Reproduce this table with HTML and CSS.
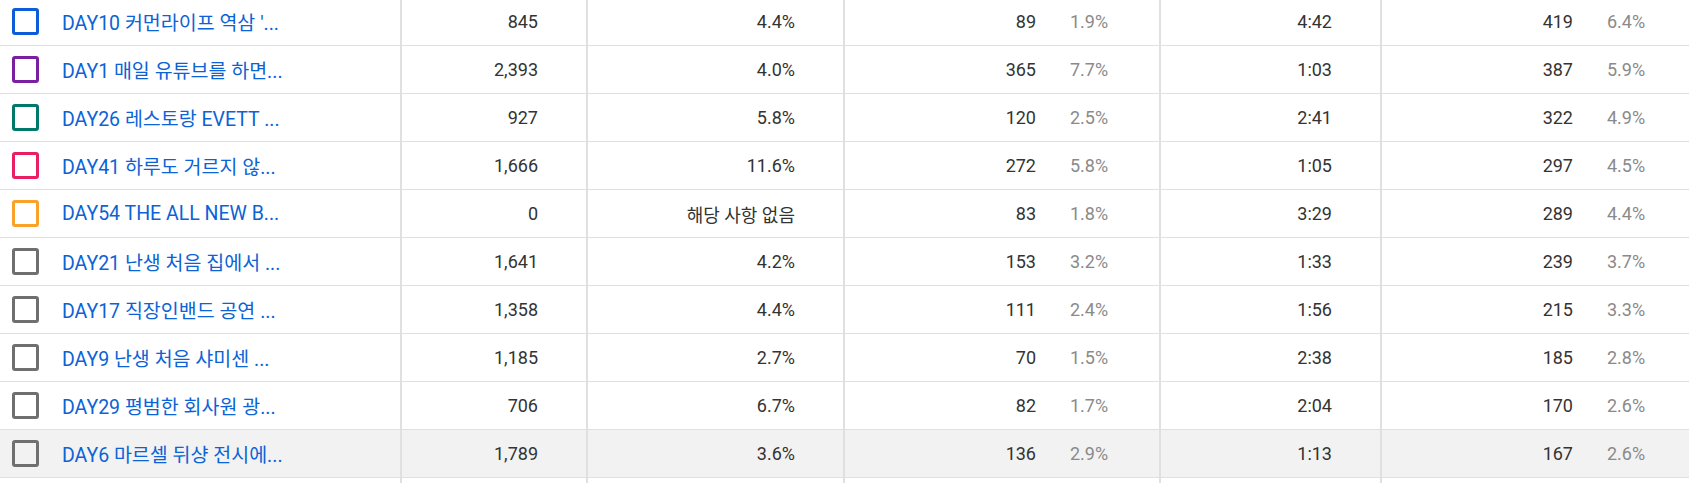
FILE: index.html
```html
<!DOCTYPE html>
<html lang="ko">
<head>
<meta charset="utf-8">
<link rel="stylesheet" href="styles.css">
</head>
<body>
<div class="table">
  <div class="row">
    <div class="cell c-title"><span class="cb cb-blue"></span><a class="title">DAY10 커먼라이프 역삼 '...</a></div>
    <div class="cell c-num">845</div>
    <div class="cell c-num">4.4%</div>
    <div class="cell c-num"><span>89</span><span class="pct">1.9%</span></div>
    <div class="cell c-num">4:42</div>
    <div class="cell c-num c-last"><span>419</span><span class="pct">6.4%</span></div>
  </div>
  <div class="row">
    <div class="cell c-title"><span class="cb cb-purple"></span><a class="title">DAY1 매일 유튜브를 하면...</a></div>
    <div class="cell c-num">2,393</div>
    <div class="cell c-num">4.0%</div>
    <div class="cell c-num"><span>365</span><span class="pct">7.7%</span></div>
    <div class="cell c-num">1:03</div>
    <div class="cell c-num c-last"><span>387</span><span class="pct">5.9%</span></div>
  </div>
  <div class="row">
    <div class="cell c-title"><span class="cb cb-teal"></span><a class="title">DAY26 레스토랑 EVETT ...</a></div>
    <div class="cell c-num">927</div>
    <div class="cell c-num">5.8%</div>
    <div class="cell c-num"><span>120</span><span class="pct">2.5%</span></div>
    <div class="cell c-num">2:41</div>
    <div class="cell c-num c-last"><span>322</span><span class="pct">4.9%</span></div>
  </div>
  <div class="row">
    <div class="cell c-title"><span class="cb cb-pink"></span><a class="title">DAY41 하루도 거르지 않...</a></div>
    <div class="cell c-num">1,666</div>
    <div class="cell c-num">11.6%</div>
    <div class="cell c-num"><span>272</span><span class="pct">5.8%</span></div>
    <div class="cell c-num">1:05</div>
    <div class="cell c-num c-last"><span>297</span><span class="pct">4.5%</span></div>
  </div>
  <div class="row">
    <div class="cell c-title"><span class="cb cb-orange"></span><a class="title">DAY54 THE ALL NEW B...</a></div>
    <div class="cell c-num">0</div>
    <div class="cell c-num">해당 사항 없음</div>
    <div class="cell c-num"><span>83</span><span class="pct">1.8%</span></div>
    <div class="cell c-num">3:29</div>
    <div class="cell c-num c-last"><span>289</span><span class="pct">4.4%</span></div>
  </div>
  <div class="row">
    <div class="cell c-title"><span class="cb"></span><a class="title">DAY21 난생 처음 집에서 ...</a></div>
    <div class="cell c-num">1,641</div>
    <div class="cell c-num">4.2%</div>
    <div class="cell c-num"><span>153</span><span class="pct">3.2%</span></div>
    <div class="cell c-num">1:33</div>
    <div class="cell c-num c-last"><span>239</span><span class="pct">3.7%</span></div>
  </div>
  <div class="row">
    <div class="cell c-title"><span class="cb"></span><a class="title">DAY17 직장인밴드 공연 ...</a></div>
    <div class="cell c-num">1,358</div>
    <div class="cell c-num">4.4%</div>
    <div class="cell c-num"><span>111</span><span class="pct">2.4%</span></div>
    <div class="cell c-num">1:56</div>
    <div class="cell c-num c-last"><span>215</span><span class="pct">3.3%</span></div>
  </div>
  <div class="row">
    <div class="cell c-title"><span class="cb"></span><a class="title">DAY9 난생 처음 샤미센 ...</a></div>
    <div class="cell c-num">1,185</div>
    <div class="cell c-num">2.7%</div>
    <div class="cell c-num"><span>70</span><span class="pct">1.5%</span></div>
    <div class="cell c-num">2:38</div>
    <div class="cell c-num c-last"><span>185</span><span class="pct">2.8%</span></div>
  </div>
  <div class="row">
    <div class="cell c-title"><span class="cb"></span><a class="title">DAY29 평범한 회사원 광...</a></div>
    <div class="cell c-num">706</div>
    <div class="cell c-num">6.7%</div>
    <div class="cell c-num"><span>82</span><span class="pct">1.7%</span></div>
    <div class="cell c-num">2:04</div>
    <div class="cell c-num c-last"><span>170</span><span class="pct">2.6%</span></div>
  </div>
  <div class="row row-hover">
    <div class="cell c-title"><span class="cb"></span><a class="title">DAY6 마르셀 뒤샹 전시에...</a></div>
    <div class="cell c-num">1,789</div>
    <div class="cell c-num">3.6%</div>
    <div class="cell c-num"><span>136</span><span class="pct">2.9%</span></div>
    <div class="cell c-num">1:13</div>
    <div class="cell c-num c-last"><span>167</span><span class="pct">2.6%</span></div>
  </div>
  <div class="row row-tail">
    <div class="cell c-title"></div>
    <div class="cell"></div>
    <div class="cell"></div>
    <div class="cell"></div>
    <div class="cell"></div>
    <div class="cell"></div>
  </div>
</div>
</body>
</html>
```
FILE: styles.css
```css
html, body {
  margin: 0;
  padding: 0;
  background: #fff;
  overflow: hidden;
}
body {
  font-family: Roboto, "Noto Sans CJK KR", sans-serif;
  font-size: 18px;
  color: #333333;
}
.table {
  margin-top: -2px;
}
.row {
  display: grid;
  grid-template-columns: 400px 186px 257px 316px 221px 1fr;
  height: 48px;
  box-sizing: border-box;
  border-bottom: 1px solid #e0e0e0;
}
.row-hover {
  background: #f2f2f2;
}
.row-tail {
  border-bottom: none;
}
.cell {
  display: flex;
  align-items: center;
  justify-content: flex-end;
  border-left: 2px solid #e0e0e0;
  padding-right: 48px;
  white-space: nowrap;
}
.c-title {
  border-left: none;
  justify-content: flex-start;
  padding: 0 0 0 12px;
}
.c-last {
  padding-right: 41px;
}
.pct {
  display: inline-block;
  width: 41px;
  margin-left: 34px;
  text-align: left;
  color: #8a8a8a;
}
.cb {
  display: inline-block;
  width: 27px;
  height: 27px;
  box-sizing: border-box;
  border: 3px solid #6f6f6f;
  border-radius: 3px;
  margin-right: 23px;
  flex: none;
}
.cb-blue { border-color: #0b5ed7; }
.cb-purple { border-color: #7b1fa2; }
.cb-teal { border-color: #00796b; }
.cb-pink { border-color: #e91e63; }
.cb-orange { border-color: #f9a12a; }
.title {
  color: #0b63d6;
  text-decoration: none;
  font-size: 19.5px;
}
```
